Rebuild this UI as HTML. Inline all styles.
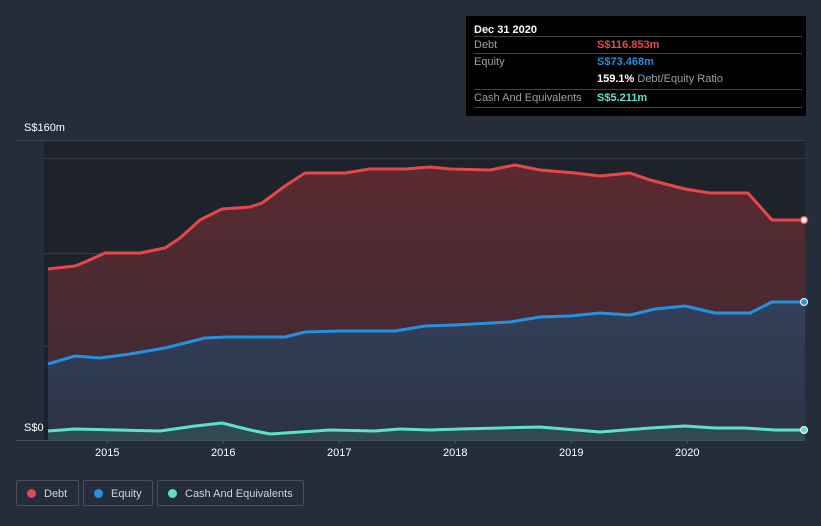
<!DOCTYPE html><html><head><style>
body{margin:0;background:#262d3a;font-family:"Liberation Sans",sans-serif;width:821px;height:526px;overflow:hidden;position:relative}
.t{position:absolute;font-size:11px;color:#fff}
.tip{position:absolute;left:466px;top:16px;width:340px;height:100px;background:#000}
.tip div{position:absolute;left:8px;width:328px;font-size:11px;color:#9aa0a8}
.leg{position:absolute;top:480px;height:26px;border:1px solid #4a505b;border-radius:2px;color:#d0d4da;font-size:11px;line-height:26px;box-sizing:border-box;padding-left:27px}
.leg:before{content:"";position:absolute;left:10px;top:8px;width:9px;height:9px;border-radius:50%;background:var(--c)}
</style></head><body>
<svg width="821" height="526" style="position:absolute;left:0;top:0">
<defs>
<linearGradient id="gd" x1="0" y1="0" x2="0" y2="1"><stop offset="0" stop-color="#5a2a30"/><stop offset="1" stop-color="#3a2a34"/></linearGradient>
<linearGradient id="ge" x1="0" y1="0" x2="0" y2="1"><stop offset="0" stop-color="#33405a"/><stop offset="1" stop-color="#2c3346"/></linearGradient>
</defs>
<rect x="44" y="140" width="761" height="300" fill="#1e222b"/>
<g stroke="#333a47" stroke-width="1"><line x1="44" y1="158.5" x2="805" y2="158.5"/><line x1="44" y1="253.5" x2="805" y2="253.5"/><line x1="44" y1="346.5" x2="805" y2="346.5"/></g>
<line x1="16" y1="140.5" x2="805" y2="140.5" stroke="#3c4350"/>
<path d="M48,269 L75,266 85,262 105,253 140,253 165,248 180,238 200,220 222,209 250,207 262,203 285,186 305,173 345,173 370,169 405,169 430,167 450,169 490,170 515,165 540,170 575,173 600,176 630,173 650,180 685,189 710,193 748,193 772,220 805,220 L805,440 48,440Z" fill="url(#gd)"/>
<path d="M48,364 L75,356 100,358 130,354 165,348 205,338 225,337 285,337 305,332 340,331 395,331 425,326 455,325 510,322 540,317 570,316 600,313 630,315 655,309 685,306 715,313 750,313 772,302 805,302 L805,440 48,440Z" fill="url(#ge)"/>
<path d="M48,431 L75,429 160,431 195,426 222,423 250,430 270,434 300,432 330,430 375,431 400,429 430,430 460,429 500,428 540,427 600,432 650,428 685,426 715,428 745,428 775,430 805,430 L805,440 48,440Z" fill="#2f4a50"/>
<g fill="none" stroke-width="3" stroke-linejoin="round">
<path d="M48,269 L75,266 85,262 105,253 140,253 165,248 180,238 200,220 222,209 250,207 262,203 285,186 305,173 345,173 370,169 405,169 430,167 450,169 490,170 515,165 540,170 575,173 600,176 630,173 650,180 685,189 710,193 748,193 772,220 805,220" stroke="#e5474b"/>
<path d="M48,364 L75,356 100,358 130,354 165,348 205,338 225,337 285,337 305,332 340,331 395,331 425,326 455,325 510,322 540,317 570,316 600,313 630,315 655,309 685,306 715,313 750,313 772,302 805,302" stroke="#2590e0"/>
<path d="M48,431 L75,429 160,431 195,426 222,423 250,430 270,434 300,432 330,430 375,431 400,429 430,430 460,429 500,428 540,427 600,432 650,428 685,426 715,428 745,428 775,430 805,430" stroke="#5fe0cc"/>
</g>
<circle cx="804" cy="220" r="3.5" fill="#fff" stroke="#e5474b" stroke-width="1.5"/>
<circle cx="804" cy="302" r="3.5" fill="#2590e0" stroke="#fff" stroke-width="1"/>
<circle cx="804" cy="430" r="3.5" fill="#5fe0cc" stroke="#fff" stroke-width="1"/>
<line x1="16" y1="440.5" x2="805" y2="440.5" stroke="#4a505b"/>
<g stroke="#4a505b"><line x1="107.5" y1="440" x2="107.5" y2="444"/><line x1="223.5" y1="440" x2="223.5" y2="444"/><line x1="339.5" y1="440" x2="339.5" y2="444"/><line x1="455.5" y1="440" x2="455.5" y2="444"/><line x1="571.5" y1="440" x2="571.5" y2="444"/><line x1="687.5" y1="440" x2="687.5" y2="444"/></g>
</svg>
<div class="t" style="left:24px;top:122px">S$160m</div>
<div class="t" style="left:24px;top:422px">S$0</div>
<div class="t" style="left:95px;top:447px">2015</div>
<div class="t" style="left:211px;top:447px">2016</div>
<div class="t" style="left:327px;top:447px">2017</div>
<div class="t" style="left:443px;top:447px">2018</div>
<div class="t" style="left:559px;top:447px">2019</div>
<div class="t" style="left:675px;top:447px">2020</div>
<div class="tip">
<div style="top:8px;color:#fff;font-weight:bold">Dec 31 2020</div>
<div style="top:20px;height:16px;border-top:1px solid #444;line-height:17px">Debt<span style="position:absolute;left:123px;color:#e5474b;font-weight:bold">S$116.853m</span></div>
<div style="top:37px;height:16px;border-top:1px solid #444;line-height:17px">Equity<span style="position:absolute;left:123px;color:#2590e0;font-weight:bold">S$73.468m</span></div>
<div style="top:55px;line-height:17px"><span style="position:absolute;left:123px;white-space:nowrap"><b style="color:#fff">159.1%</b> Debt/Equity Ratio</span></div>
<div style="top:73px;height:17px;border-top:1px solid #444;border-bottom:1px solid #444;line-height:17px">Cash And Equivalents<span style="position:absolute;left:123px;color:#5fe0cc;font-weight:bold">S$5.211m</span></div>
</div>
<div class="leg" style="left:16px;width:63px;--c:#e5474b">Debt</div>
<div class="leg" style="left:83px;width:70px;--c:#2590e0">Equity</div>
<div class="leg" style="left:157px;width:147px;--c:#5fe0cc">Cash And Equivalents</div>
</body></html>
